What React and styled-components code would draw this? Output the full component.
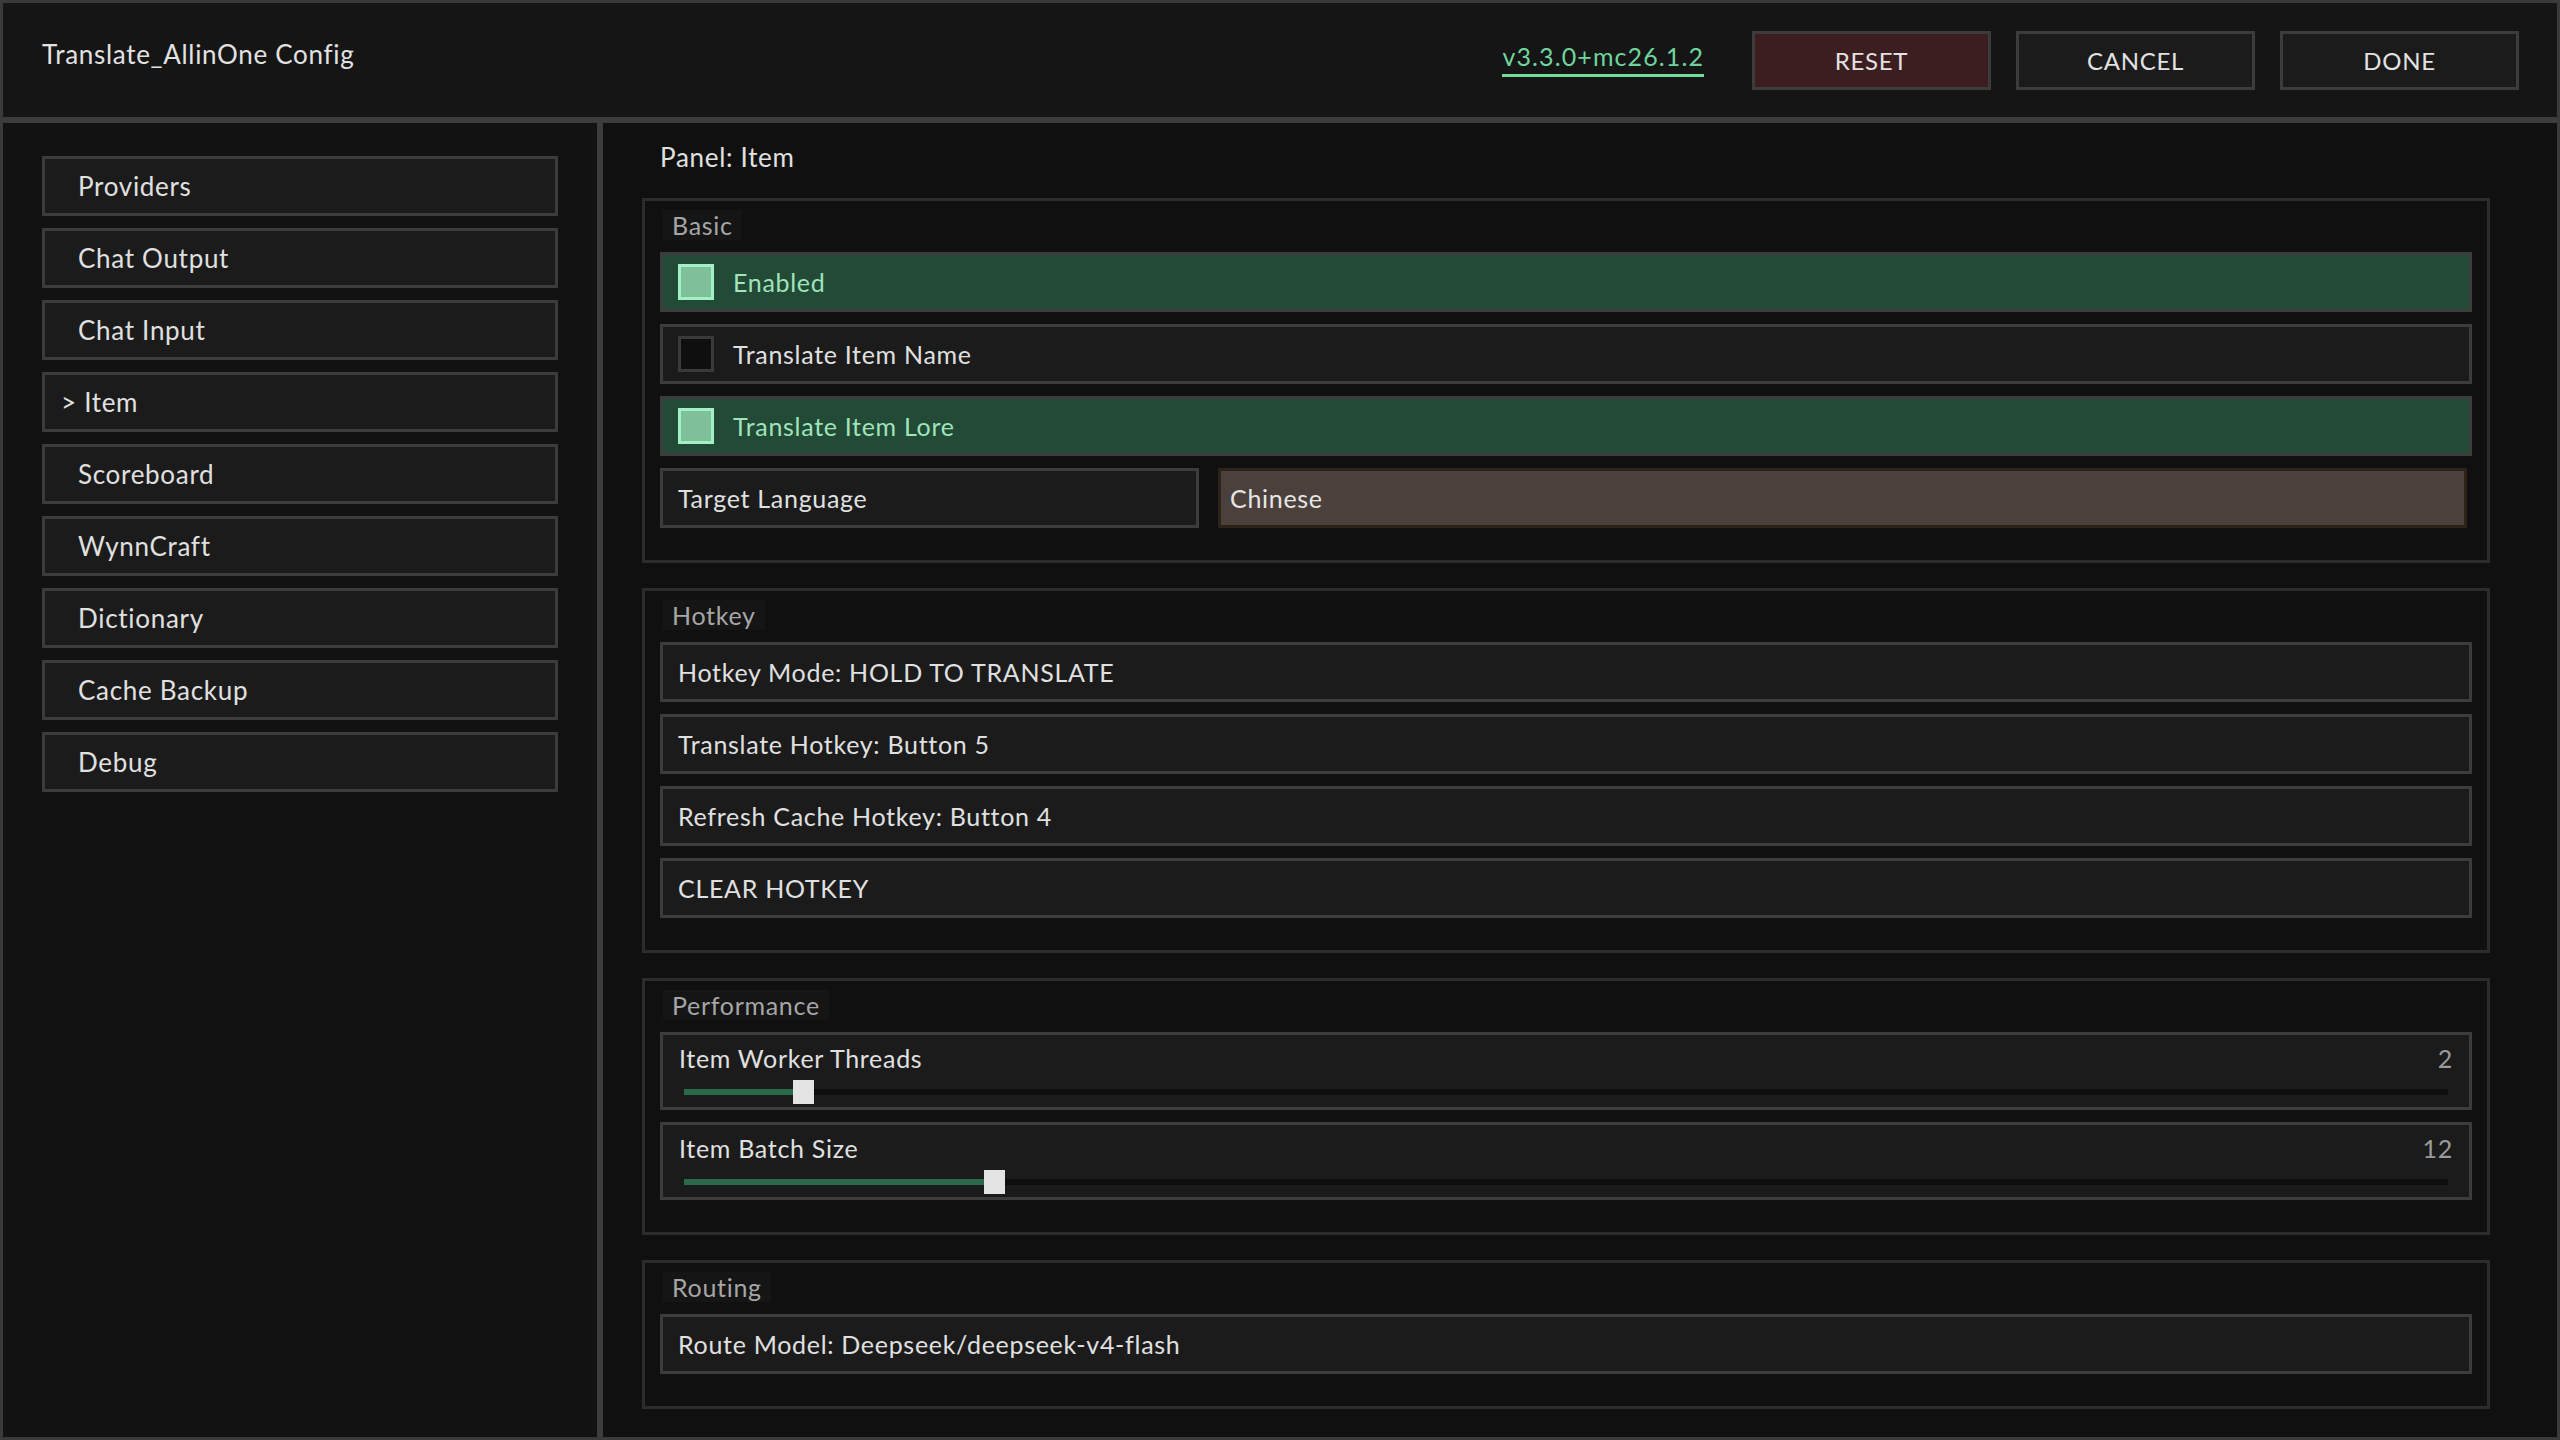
import React from "react";
import styled, { createGlobalStyle } from "styled-components";

const GlobalStyle = createGlobalStyle`
  html, body { margin: 0; padding: 0; background: #111111; }
  * { box-sizing: border-box; }
  body { font-family: Lato, "Noto Sans", sans-serif; color: #e0e0e0; letter-spacing: 0.7px; }
`;

const Frame = styled.div`
  width: 2560px;
  height: 1440px;
  border: 3px solid #3a3a3a;
  display: flex;
  flex-direction: column;
  background: #111111;
  overflow: hidden;
`;

const Header = styled.header`
  height: 120px;
  flex: none;
  background: #151515;
  border-bottom: 6px solid #3c3c3c;
  display: flex;
  align-items: center;
  padding: 0 38px 0 39px;
`;

const Title = styled.div`
  font-size: 26px;
  line-height: 30px;
  color: #e2e2e2;
  margin-bottom: 12px;
  flex: 1;
`;

const Version = styled.div`
  font-size: 25px;
  line-height: 30px;
  letter-spacing: 1.1px;
  color: #6fd49c;
  border-bottom: 3px solid #6fdc9e;
  padding-bottom: 3px;
  margin-right: 48px;
  margin-bottom: 2px;
`;

const Buttons = styled.div`
  display: flex;
  gap: 25px;
`;

const HeadButton = styled.div`
  width: 239px;
  height: 59px;
  border: 3px solid #3c3c3c;
  background: ${(p) => (p.$danger ? "#3d1e20" : "#1b1b1b")};
  display: flex;
  align-items: center;
  justify-content: center;
  font-size: 24px;
  color: #e2e2e2;
  padding-top: 1px;
`;

const Body = styled.div`
  flex: 1;
  display: flex;
  min-height: 0;
`;

const Sidebar = styled.nav`
  width: 600px;
  flex: none;
  border-right: 6px solid #3c3c3c;
  background: #121212;
  padding: 33px 39px;
  display: flex;
  flex-direction: column;
  gap: 12px;
`;

const NavItem = styled.div`
  height: 60px;
  border: 3px solid #3c3c3c;
  background: #1b1b1b;
  display: flex;
  align-items: center;
  padding-left: ${(p) => (p.$active ? "16px" : "33px")};
  font-size: 26px;
  color: #e0e0e0;
`;

const Main = styled.main`
  flex: 1;
  padding: 19px 67px 0 39px;
  display: flex;
  flex-direction: column;
  background: #101010;
`;

const PanelTitle = styled.div`
  font-size: 26px;
  line-height: 30px;
  color: #e0e0e0;
  padding-left: 18px;
  margin-bottom: 26px;
`;

const Sections = styled.div`
  display: flex;
  flex-direction: column;
  gap: 25px;
`;

const Section = styled.section`
  border: 3px solid #2c2c2c;
  padding: 9px 15px 32px 15px;
  display: flex;
  flex-direction: column;
  gap: 12px;
`;

const SectionLabel = styled.div`
  align-self: flex-start;
  margin-left: 3px;
  height: 30px;
  line-height: 30px;
  padding: 0 9px;
  background: #151515;
  color: #a6a6a6;
  font-size: 25px;
`;

const Row = styled.div`
  height: 60px;
  border: 3px solid #3c3c3c;
  background: ${(p) => (p.$on ? "#234a37" : "#1b1b1b")};
  color: ${(p) => (p.$on ? "#9fe4bb" : "#e0e0e0")};
  display: flex;
  align-items: center;
  padding: 0 15px;
  font-size: 25px;
  gap: 19px;
`;

const Check = styled.span`
  width: 36px;
  height: 36px;
  flex: none;
  border: 3px solid ${(p) => (p.$on ? "#a4f0c5" : "#3a3a3a")};
  background: ${(p) => (p.$on ? "#7fbf9a" : "#0f0f0f")};
`;

const FieldRow = styled.div`
  display: grid;
  grid-template-columns: 539px 1fr;
  gap: 19px;
`;

const FieldLabel = styled.div`
  height: 60px;
  border: 3px solid #3c3c3c;
  background: #1b1b1b;
  display: flex;
  align-items: center;
  padding: 0 15px;
  font-size: 25px;
  color: #e0e0e0;
`;

const FieldValue = styled.div`
  height: 60px;
  border: 3px solid #2d2319;
  background: #4b403c;
  display: flex;
  align-items: center;
  padding: 0 9px;
  font-size: 25px;
  color: #e6e6e6;
  margin-right: 5px;
`;

const SliderRow = styled.div`
  height: 78px;
  border: 3px solid #3c3c3c;
  background: #1b1b1b;
  padding: 8px 16px 0 16px;
  display: flex;
  flex-direction: column;
`;

const SliderTop = styled.div`
  display: flex;
  justify-content: space-between;
  font-size: 25px;
  line-height: 30px;
  color: #e0e0e0;
`;

const SliderValue = styled.span`
  color: #9a9a9a;
`;

const Track = styled.div`
  position: relative;
  height: 6px;
  margin: 16px 5px 0 5px;
  background: #0e0e0e;
`;

const TrackFill = styled.div`
  position: absolute;
  left: 0;
  top: 0;
  height: 6px;
  background: #2a6a4b;
`;

const Handle = styled.div`
  position: absolute;
  top: -9px;
  width: 21px;
  height: 24px;
  background: #e4e4e4;
`;

function Slider({ label, value, min, max }) {
  const frac = (value - min) / (max - min);
  const pos = `calc((100% - 21px) * ${frac})`;
  return (
    <SliderRow>
      <SliderTop>
        <span>{label}</span>
        <SliderValue>{value}</SliderValue>
      </SliderTop>
      <Track>
        <TrackFill style={{ width: pos }} />
        <Handle style={{ left: pos }} />
      </Track>
    </SliderRow>
  );
}

const nav = [
  "Providers",
  "Chat Output",
  "Chat Input",
  "Item",
  "Scoreboard",
  "WynnCraft",
  "Dictionary",
  "Cache Backup",
  "Debug",
];

export default function App() {
  return (
    <>
      <GlobalStyle />
      <Frame>
        <Header>
          <Title>Translate_AllinOne Config</Title>
          <Version>v3.3.0+mc26.1.2</Version>
          <Buttons>
            <HeadButton $danger>RESET</HeadButton>
            <HeadButton>CANCEL</HeadButton>
            <HeadButton>DONE</HeadButton>
          </Buttons>
        </Header>
        <Body>
          <Sidebar>
            {nav.map((n) => (
              <NavItem key={n} $active={n === "Item"}>
                {n === "Item" ? "> Item" : n}
              </NavItem>
            ))}
          </Sidebar>
          <Main>
            <PanelTitle>Panel: Item</PanelTitle>
            <Sections>
              <Section>
                <SectionLabel>Basic</SectionLabel>
                <Row $on>
                  <Check $on />
                  Enabled
                </Row>
                <Row>
                  <Check />
                  Translate Item Name
                </Row>
                <Row $on>
                  <Check $on />
                  Translate Item Lore
                </Row>
                <FieldRow>
                  <FieldLabel>Target Language</FieldLabel>
                  <FieldValue>Chinese</FieldValue>
                </FieldRow>
              </Section>
              <Section>
                <SectionLabel>Hotkey</SectionLabel>
                <Row>Hotkey Mode: HOLD TO TRANSLATE</Row>
                <Row>Translate Hotkey: Button 5</Row>
                <Row>Refresh Cache Hotkey: Button 4</Row>
                <Row>CLEAR HOTKEY</Row>
              </Section>
              <Section>
                <SectionLabel>Performance</SectionLabel>
                <Slider label="Item Worker Threads" value={2} min={1} max={17} />
                <Slider label="Item Batch Size" value={12} min={1} max={65} />
              </Section>
              <Section>
                <SectionLabel>Routing</SectionLabel>
                <Row>Route Model: Deepseek/deepseek-v4-flash</Row>
              </Section>
            </Sections>
          </Main>
        </Body>
      </Frame>
    </>
  );
}
